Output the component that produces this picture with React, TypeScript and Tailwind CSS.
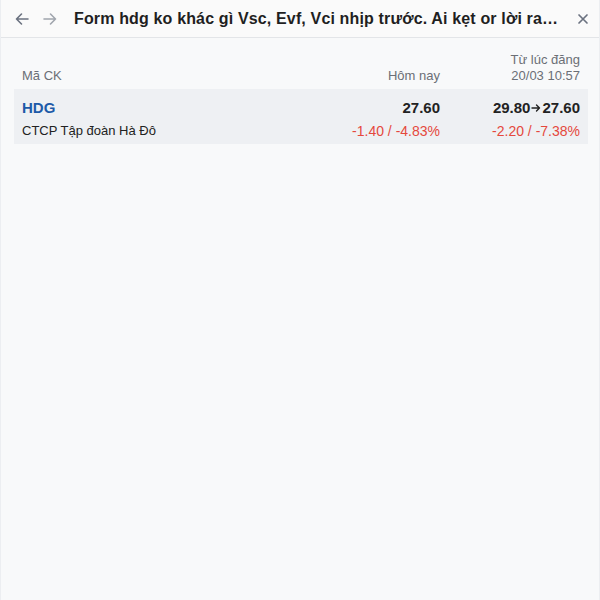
import React from 'react';

const rows = [
  {
    code: 'HDG',
    name: 'CTCP Tập đoàn Hà Đô',
    today: '27.60',
    todayChange: '-1.40 / -4.83%',
    from: '29.80',
    to: '27.60',
    sinceChange: '-2.20 / -7.38%',
  },
];

const App: React.FC = () => {
  return (
    <div className="w-[600px] h-[600px] bg-[#f8f9fa] text-[#222] border-x border-[#eceef1] flex flex-col" style={{ fontFamily: '"Liberation Sans", Arial, sans-serif' }}>
      {/* Header */}
      <div className="h-[38px] shrink-0 flex items-center border-b border-[#e3e5e8] bg-[#fafafa] pl-[12px] pr-[8px]">
        <button className="w-[18px] h-[18px] flex items-center justify-center text-[#6b7280]">
          <svg width="16" height="16" viewBox="0 0 16 16" fill="none" stroke="currentColor" strokeWidth="1.6" strokeLinecap="round" strokeLinejoin="round">
            <path d="M14 8H2.5M7.5 3L2.5 8l5 5" />
          </svg>
        </button>
        <button className="ml-[10px] w-[18px] h-[18px] flex items-center justify-center text-[#a0a5ad]">
          <svg width="16" height="16" viewBox="0 0 16 16" fill="none" stroke="currentColor" strokeWidth="1.6" strokeLinecap="round" strokeLinejoin="round">
            <path d="M2 8h11.5M8.5 3l5 5-5 5" />
          </svg>
        </button>
        <div className="ml-[15px] flex-1 min-w-0 whitespace-nowrap font-bold text-[16px] tracking-[0.15px] text-[#1f1f1f]">
          Form hdg ko khác gì Vsc, Evf, Vci nhịp trước. Ai kẹt or lời ra…
        </div>
        <button className="ml-[6px] w-[16px] h-[16px] flex items-center justify-center text-[#6b7280]">
          <svg width="12" height="12" viewBox="0 0 12 12" fill="none" stroke="currentColor" strokeWidth="1.7" strokeLinecap="round">
            <path d="M2 2l8 8M10 2l-8 8" />
          </svg>
        </button>
      </div>

      {/* Table */}
      <div className="pl-[13px] pr-[11px] pt-[14px]">
        <div className="flex items-end px-[8px] pb-[5px] text-[13px] leading-[16px] text-[#6b6f76]">
          <div className="flex-1">Mã CK</div>
          <div className="w-[140px] text-right">Hôm nay</div>
          <div className="w-[140px] text-right">
            <div>Từ lúc đăng</div>
            <div>20/03 10:57</div>
          </div>
        </div>
        {rows.map((r) => (
          <div key={r.code} className="bg-[#eef0f3] px-[8px] pt-[9px] pb-[3px] flex">
            <div className="flex-1">
              <div className="text-[15px] leading-[20px] font-bold text-[#1d5aa8]">{r.code}</div>
              <div className="text-[13px] leading-[20px] mt-[3px] text-[#222]">{r.name}</div>
            </div>
            <div className="w-[140px] text-right">
              <div className="text-[15px] leading-[20px] font-bold text-[#222]">{r.today}</div>
              <div className="text-[14px] leading-[20px] mt-[3px] text-[#e5483d]">{r.todayChange}</div>
            </div>
            <div className="w-[140px] text-right">
              <div className="text-[15px] leading-[20px] font-bold text-[#222] flex items-center justify-end">
                {r.from}
                <svg className="mx-[1px]" width="10" height="10" viewBox="0 0 10 10" fill="none" stroke="currentColor" strokeWidth="1.4" strokeLinecap="round" strokeLinejoin="round">
                  <path d="M1 5h7.5M5.5 2l3 3-3 3" />
                </svg>
                {r.to}
              </div>
              <div className="text-[14px] leading-[20px] mt-[3px] text-[#e5483d]">{r.sinceChange}</div>
            </div>
          </div>
        ))}
      </div>
    </div>
  );
};

export default App;
